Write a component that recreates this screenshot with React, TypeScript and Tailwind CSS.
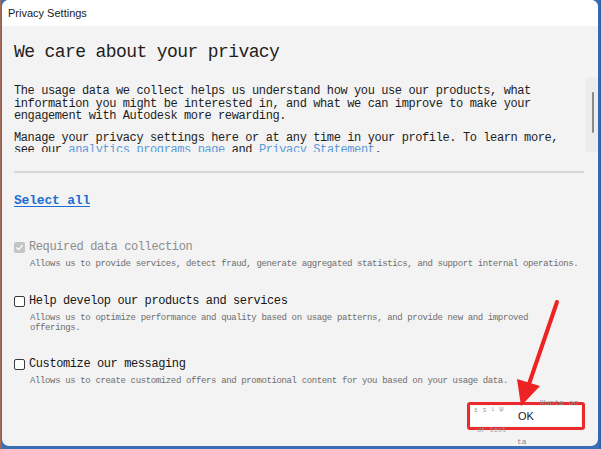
import React from 'react';

// Monospace body text (reference renders with a CJK system font at half-width)
const mono = "font-['Liberation_Mono','DejaVu_Sans_Mono',monospace]";

type Option = {
  label: string;
  lines: string[];
  checked?: boolean;
  disabled?: boolean;
};

const options: Option[] = [
  {
    label: 'Required data collection',
    lines: [
      'Allows us to provide services, detect fraud, generate aggregated statistics, and support internal operations.',
    ],
    checked: true,
    disabled: true,
  },
  {
    label: 'Help develop our products and services',
    lines: [
      'Allows us to optimize performance and quality based on usage patterns, and provide new and improved',
      'offerings.',
    ],
  },
  {
    label: 'Customize our messaging',
    lines: [
      'Allows us to create customized offers and promotional content for you based on your usage data.',
    ],
  },
];

const Checkbox: React.FC<{ checked?: boolean; disabled?: boolean }> = ({ checked, disabled }) => {
  if (checked && disabled) {
    return (
      <span className="flex h-[11px] w-[11px] shrink-0 items-center justify-center rounded-[2px] bg-[#c4c4c4]">
        <svg width="9" height="9" viewBox="0 0 9 9">
          <path d="M1.5 4.6 L3.6 6.6 L7.6 2.2" fill="none" stroke="#fff" strokeWidth="1.4" />
        </svg>
      </span>
    );
  }
  return <span className="h-[11px] w-[11px] shrink-0 rounded-[2px] border border-[#3a3a3a] bg-white" />;
};

const OptionRow: React.FC<{ option: Option; className?: string }> = ({ option, className }) => (
  <div className={className}>
    <div className="flex h-[14px] items-center gap-[4px]">
      <Checkbox checked={option.checked} disabled={option.disabled} />
      <span
        className={`${mono} text-[12px] leading-[14px] tracking-[-0.4px] whitespace-nowrap ${
          option.disabled ? 'text-[#8c8c8c]' : 'text-[#161616]'
        }`}
      >
        {option.label}
      </span>
    </div>
    <div className={`${mono} mt-[5px] pl-[16px] text-[9px] leading-[10px] tracking-[-0.37px] text-[#6e6e6e]`}>
      {option.lines.map((l) => (
        <div key={l} className="whitespace-nowrap">
          {l}
        </div>
      ))}
    </div>
  </div>
);

const App: React.FC = () => {
  return (
    <div className="relative h-[449px] w-[601px] overflow-hidden bg-[linear-gradient(90deg,#c7693a_0px,#3b6fb6_2px,#3b6fb6_598px,#2c5ea8_601px)]">
      {/* Dialog window */}
      <div className="ml-[2px] flex h-[446px] w-[596px] flex-col overflow-hidden rounded-[7px] bg-[#f3f3f3]">
        {/* Title bar */}
        <div className="flex h-[26px] shrink-0 items-center bg-white pl-[6px] font-['Liberation_Sans',Arial,sans-serif] text-[11px] text-[#1a1a1a]">
          Privacy Settings
        </div>

        {/* Heading */}
        <h1 className={`${mono} mt-[15px] pl-[12px] text-[18px] leading-[22px] tracking-[-0.6px] text-[#1e1e1e]`}>
          We care about your privacy
        </h1>

        {/* Scrollable intro text */}
        <div className="mt-[15px] flex h-[74px] shrink-0 overflow-hidden">
          <div className={`${mono} flex-1 overflow-hidden pl-[12px] pt-[7px] text-[12px] leading-[12.5px] tracking-[-0.4px] text-[#1e1e1e]`}>
            <div className="whitespace-nowrap">
              The usage data we collect helps us understand how you use our products, what
            </div>
            <div className="whitespace-nowrap">
              information you might be interested in, and what we can improve to make your
            </div>
            <div className="whitespace-nowrap">engagement with Autodesk more rewarding.</div>
            <div className="mt-[9px] whitespace-nowrap">
              Manage your privacy settings here or at any time in your profile. To learn more,
            </div>
            <div className="whitespace-nowrap">
              see our <span className="text-[#5c9ad8]">analytics programs page</span> and{' '}
              <span className="text-[#5c9ad8]">Privacy Statement</span>.
            </div>
          </div>
          {/* Scroll track */}
          <div className="w-[12px] shrink-0 bg-[#ececec] pt-[14px] pl-[6px]">
            <div className="h-[41px] w-[2px] rounded-full bg-[#8a8a8a]" />
          </div>
        </div>

        {/* Divider */}
        <div className="ml-[12px] mt-[19px] h-[2px] w-[570px] bg-[#d6d6d6]" />

        {/* Select all */}
        <div className="mt-[13px] pl-[12px]">
          <span className={`${mono} text-[13px] font-bold leading-[16px] tracking-[-0.2px] text-[#1c6fd2] underline underline-offset-2`}>
            Select all
          </span>
        </div>

        {/* Options */}
        <div className="pl-[12px]">
          <OptionRow option={options[0]} className="mt-[30px]" />
          <OptionRow option={options[1]} className="mt-[25px]" />
          <OptionRow option={options[2]} className="mt-[24px]" />
        </div>

        {/* Footer */}
        <div className="mt-auto flex justify-end pb-[16px] pr-[13px]">
          <div className="rounded-[3px] border-[3px] border-[#ea2b2b] p-[1px]">
            <button className="flex h-[20px] w-[110px] items-center justify-center bg-white font-['Liberation_Sans',Arial,sans-serif] text-[11px] text-[#1a1a1a]">
              OK
            </button>
          </div>
        </div>
      </div>

      {/* Red annotation arrow */}
      <svg className="pointer-events-none absolute left-0 top-0" width="601" height="449">
        <path d="M557 302 L529 384" stroke="#ee2222" strokeWidth="4" strokeLinecap="round" />
        <path d="M521 406 L517 379 L540 386 Z" fill="#ee2222" />
      </svg>

      {/* Faint text artifacts around the button */}
      <span className={`${mono} absolute left-[474px] top-[406px] text-[7px] leading-[8px] text-[#9a9a9a]`}>ε s ¹ Ψ</span>
      <span className={`${mono} absolute left-[540px] top-[398px] text-[8px] leading-[9px] text-[#8a8a8a]`}>Ψunta  on</span>
      <span className={`${mono} absolute left-[477px] top-[426px] text-[7px] leading-[8px] text-[#9a9a9a]`}>ur text</span>
      <span className={`${mono} absolute left-[517px] top-[437px] text-[8px] leading-[9px] text-[#8a8a8a]`}>ta</span>
    </div>
  );
};

export default App;
